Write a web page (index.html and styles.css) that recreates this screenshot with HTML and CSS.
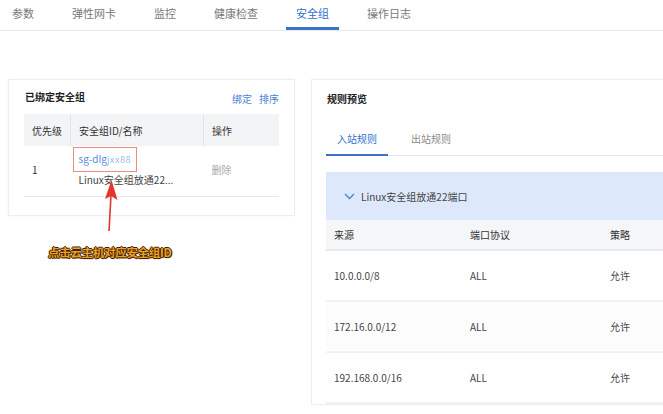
FILE: index.html
```html
<!DOCTYPE html>
<html lang="zh-CN">
<head>
  <meta charset="UTF-8">
  <meta name="viewport" content="width=device-width, initial-scale=1.0">
  <title>安全组</title>
  <link rel="stylesheet" href="styles.css">
</head>
<body>

  <div class="tabs">
    <span class="tab">参数</span>
    <span class="tab">弹性网卡</span>
    <span class="tab">监控</span>
    <span class="tab">健康检查</span>
    <span class="tab active">安全组</span>
    <span class="tab">操作日志</span>
  </div>

  <div class="main">
    <div class="left">
      <div class="card bound">
        <div class="card-head">
          <span class="card-title">已绑定安全组</span>
          <span class="actions"><a>绑定</a><a>排序</a></span>
        </div>
        <table class="bound-table">
          <tr>
            <th class="c1">优先级</th>
            <th class="c2">安全组ID/名称</th>
            <th class="c3">操作</th>
          </tr>
          <tr>
            <td class="c1">1</td>
            <td class="c2">
              <span class="hl">sg-dlg<span class="blur">jxx88</span></span>
              <div class="sg-name">Linux安全组放通22...</div>
            </td>
            <td class="c3 muted">删除</td>
          </tr>
        </table>
      </div>

      <div class="note">点击云主机对应安全组ID</div>

      <!-- annotation arrow -->
      <svg class="arrow" width="24" height="56" viewBox="0 0 24 56">
        <line x1="11" y1="52" x2="13" y2="16" stroke="#e8352b" stroke-width="1.6"/>
        <polygon points="13.5,1 19.5,21 13,17 7,20" fill="#e8352b"/>
      </svg>
    </div>

    <div class="card preview">
      <div class="card-head">
        <span class="card-title">规则预览</span>
      </div>
      <div class="sub-tabs">
        <span class="sub-tab active">入站规则</span>
        <span class="sub-tab">出站规则</span>
      </div>
      <div class="group">
        <svg width="11" height="7" viewBox="0 0 11 7"><polyline points="1,1 5.5,5.5 10,1" fill="none" stroke="#4a7fd6" stroke-width="1.3"/></svg>
        <span>Linux安全组放通22端口</span>
      </div>
      <table class="rule-table">
        <tr>
          <th class="r1">来源</th>
          <th class="r2">端口协议</th>
          <th>策略</th>
        </tr>
        <tr>
          <td class="r1">10.0.0.0/8</td>
          <td class="r2">ALL</td>
          <td>允许</td>
        </tr>
        <tr class="alt">
          <td class="r1">172.16.0.0/12</td>
          <td class="r2">ALL</td>
          <td>允许</td>
        </tr>
        <tr>
          <td class="r1">192.168.0.0/16</td>
          <td class="r2">ALL</td>
          <td>允许</td>
        </tr>
      </table>
    </div>
  </div>

</body>
</html>
```

FILE: styles.css
```css
body {
  margin: 0;
  background-color: #fff;
  font-family: "Noto Sans CJK SC", "Liberation Sans", sans-serif;
  color: #333;
  overflow: hidden;
}

.tabs {
  display: flex;
  gap: 18px;
  height: 30px;
  padding-left: 2px;
  border-bottom: 1px solid #e6e8eb;
}

.tab {
  padding: 0 10px;
  font-size: 11px;
  line-height: 26px;
  color: #777;
}

.tab.active {
  color: #2f6fce;
  border-bottom: 3px solid #3a72c4;
}

.main {
  display: flex;
  gap: 16px;
  padding: 48px 0 0 8px;
}

.left {
  position: relative;
  width: 287px;
  flex-shrink: 0;
}

.card {
  border: 1px solid #eceef1;
  background: #fff;
  box-shadow: 0 0 3px rgba(0, 0, 0, 0.03);
}

.bound {
  padding: 6px 15px 18px 15px;
}

.card-head {
  display: flex;
  justify-content: space-between;
  align-items: center;
  height: 20px;
}

.card-title {
  font-size: 10px;
  font-weight: bold;
  color: #222;
  padding-left: 1px;
}

.actions a {
  font-size: 10px;
  color: #4a7fd6;
  margin-left: 7px;
}

.bound-table {
  width: 100%;
  margin-top: 8px;
  border-collapse: collapse;
  font-size: 10px;
}

.bound-table th {
  height: 32px;
  padding: 0 8px;
  background: #f3f4f6;
  text-align: left;
  font-weight: normal;
  color: #333;
}

.bound-table th.c2,
.bound-table th.c3 {
  border-left: 1px solid #e2e4e8;
}

.bound-table td {
  padding: 1px 8px 8px;
  border-bottom: 1px solid #e6e8eb;
  vertical-align: top;
  line-height: 16px;
}

.bound-table td.c1,
.bound-table td.c3 {
  vertical-align: middle;
  padding-top: 6px;
}

.c1 {
  width: 30px;
}

.c2 {
  width: 116px;
}

.hl {
  display: inline-block;
  border: 1px solid #ee8a84;
  padding: 3px 5px;
  margin-left: -6px;
  color: #5a8ce0;
  line-height: 16px;
}

.blur {
  color: #9ab8ee;
  font-size: 9px;
  letter-spacing: 0.6px;
  filter: blur(0.5px);
}

.sg-name {
  color: #444;
}

.muted {
  color: #aaa;
}

.note {
  margin: 28px 0 0 40px;
  font-size: 11.5px;
  font-weight: bold;
  color: #f2a020;
  letter-spacing: -0.3px;
  text-shadow: 1px 0 0 #3b2308, -1px 0 0 #3b2308, 0 1px 0 #3b2308, 0 -1px 0 #3b2308, 1px 1px 1px #3b2308;
}

.arrow {
  position: absolute;
  left: 90px;
  top: 100px;
}

.preview {
  width: 420px;
  flex-shrink: 0;
  padding: 8px 0 0 14px;
  border-right: none;
}

.sub-tabs {
  display: flex;
  gap: 12px;
  margin-top: 16px;
  border-bottom: 1px solid #e6e8eb;
}

.sub-tab {
  padding: 0 11px;
  font-size: 10px;
  line-height: 30px;
  color: #888;
}

.sub-tab.active {
  color: #2f6fce;
  border-bottom: 2px solid #3a72c4;
  margin-bottom: -1px;
}

.group {
  display: flex;
  align-items: center;
  gap: 6px;
  height: 48px;
  margin-top: 16px;
  padding-left: 18px;
  background: #dde9fb;
  font-size: 10px;
  color: #444;
}

.rule-table {
  width: 100%;
  border-collapse: collapse;
  font-size: 10px;
}

.rule-table th {
  height: 29px;
  padding: 0 8px;
  background: #f5f6f8;
  border-bottom: 2px solid #e8eaed;
  text-align: left;
  font-weight: normal;
  color: #333;
}

.rule-table td {
  height: 49px;
  padding: 0 8px;
  border-bottom: 2px solid #f1f2f4;
  color: #444;
}

.rule-table tr.alt td {
  background: #fcfcfd;
}

.r1 {
  width: 120px;
}

.r2 {
  width: 124px;
}
```
